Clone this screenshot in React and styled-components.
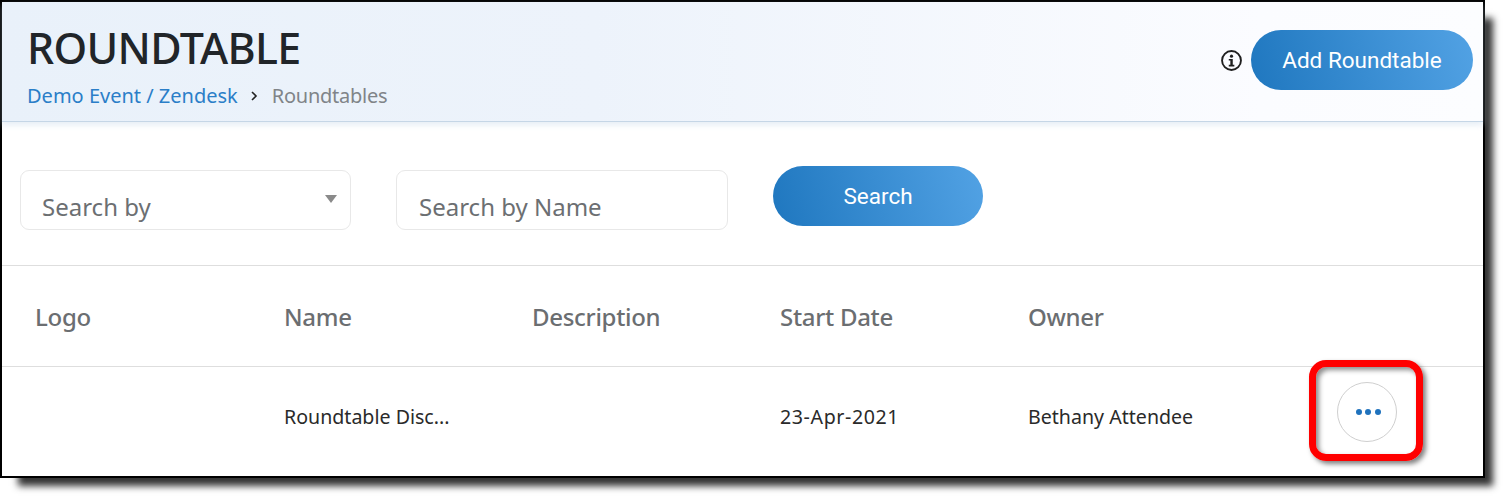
import React from "react";
import styled, { createGlobalStyle } from "styled-components";

const GlobalStyle = createGlobalStyle`
  html, body {
    margin: 0;
    padding: 0;
    background: #fff;
    font-family: "Noto Sans", "Open Sans", sans-serif;
  }
  body, #root { min-height: 503px; }
  * { box-sizing: border-box; }
`;

const columns = ["Logo", "Name", "Description", "Start Date", "Owner"];

export default function App() {
  return (
    <>
      <GlobalStyle />
      <Frame>
        <PageHeader>
          <div>
            <Title>ROUNDTABLE</Title>
            <Breadcrumb>
              <Crumb href="#">Demo Event / Zendesk</Crumb>
              <Chevron viewBox="0 0 8 10">
                <path d="M2 1l4 4-4 4" fill="none" stroke="#222" strokeWidth="1.6" />
              </Chevron>
              <CurrentCrumb>Roundtables</CurrentCrumb>
            </Breadcrumb>
          </div>
          <HeaderActions>
            <InfoIcon viewBox="0 0 20 20">
              <circle cx="10" cy="10" r="9" fill="none" stroke="#1f1f1f" strokeWidth="1.8" />
              <circle cx="10" cy="5.9" r="1.5" fill="#1f1f1f" />
              <path d="M7.4 8.5h3.8v5.6h1.5v1.5H7.4v-1.5h1.5v-4.1H7.4z" fill="#1f1f1f" />
            </InfoIcon>
            <PillButton $width={222}>Add Roundtable</PillButton>
          </HeaderActions>
        </PageHeader>

        <Filters>
          <SelectBox>
            <FieldText>Search by</FieldText>
            <Caret />
          </SelectBox>
          <InputBox>
            <FieldText>Search by Name</FieldText>
          </InputBox>
          <PillButton $width={210}>Search</PillButton>
        </Filters>

        <HeadRow>
          {columns.map((c) => (
            <HeadCell key={c}>{c}</HeadCell>
          ))}
        </HeadRow>

        <BodyRow>
          <Cell />
          <Cell>Roundtable Disc...</Cell>
          <Cell />
          <Cell $spacing={0.6}>23-Apr-2021</Cell>
          <Cell>Bethany Attendee</Cell>
          <ActionCell>
            <MoreButton>
              <Dot />
              <Dot />
              <Dot />
            </MoreButton>
            <Highlight />
          </ActionCell>
        </BodyRow>
      </Frame>
    </>
  );
}

const Frame = styled.div`
  width: 1485px;
  height: 478px;
  border: 2px solid #000;
  background: #fff;
  box-shadow: 13px 13px 7px -5px rgba(0, 0, 0, 0.8);
`;

const PageHeader = styled.header`
  display: flex;
  align-items: flex-start;
  justify-content: space-between;
  height: 120px;
  padding: 17px 10px 0 25px;
  background: linear-gradient(90deg, #e9f1fa 0%, #edf3fb 40%, #fbfcff 85%, #fcfdff 100%);
  border-bottom: 1px solid #c5d6e6;
  box-shadow: 0 3px 6px rgba(190, 210, 230, 0.4);
`;

const Title = styled.h1`
  margin: 0;
  font-size: 43px;
  line-height: 58px;
  font-weight: 500;
  color: #212529;
  letter-spacing: -0.7px;
`;

const Breadcrumb = styled.nav`
  display: flex;
  align-items: center;
  margin-top: 4px;
  font-size: 20px;
  line-height: 30px;
`;

const Crumb = styled.a`
  color: #2a7ec8;
  text-decoration: none;
`;

const Chevron = styled.svg`
  width: 8px;
  height: 10px;
  margin: 0 14px 0 12px;
`;

const CurrentCrumb = styled.span`
  color: #808488;
  letter-spacing: -0.25px;
`;

const HeaderActions = styled.div`
  display: flex;
  align-items: center;
  gap: 9px;
  margin-top: 11px;
`;

const InfoIcon = styled.svg`
  width: 21px;
  height: 21px;
`;

const PillButton = styled.button`
  width: ${(p) => p.$width}px;
  height: 60px;
  padding: 0;
  border: none;
  border-radius: 30px;
  background: linear-gradient(75deg, #1f77bf 0%, #52a2e4 100%);
  color: #fff;
  font-family: Roboto, sans-serif;
  font-size: 22.5px;
  font-weight: 400;
`;

const Filters = styled.section`
  display: flex;
  align-items: flex-start;
  height: 144px;
  padding: 44px 0 0 18px;
  border-bottom: 1px solid #dedede;
`;

const FieldBox = styled.div`
  position: relative;
  height: 60px;
  margin-top: 4px;
  padding: 19px 0 0 22px;
  border: 1px solid #e8e8e8;
  border-radius: 9px;
  background: #fff;
`;

const SelectBox = styled(FieldBox)`
  width: 331px;
  margin-right: 45px;
  padding-left: 21px;
`;

const InputBox = styled(FieldBox)`
  width: 332px;
  margin-right: 45px;
`;

const FieldText = styled.span`
  font-size: 24px;
  line-height: 33px;
  color: #6c6f72;
`;

const Caret = styled.span`
  position: absolute;
  top: 24px;
  right: 13px;
  width: 0;
  height: 0;
  border-left: 6px solid transparent;
  border-right: 6px solid transparent;
  border-top: 8px solid #8a8a8a;
`;

const tableGrid = `
  display: grid;
  grid-template-columns: 249px 248px 248px 248px 248px 1fr;
  align-items: center;
  padding-left: 33px;
`;

const HeadRow = styled.div`
  ${tableGrid}
  height: 101px;
  border-bottom: 1px solid #dedede;
`;

const HeadCell = styled.div`
  font-size: 24px;
  font-weight: 500;
  color: #6b6e71;
  letter-spacing: -0.3px;
`;

const BodyRow = styled.div`
  ${tableGrid}
  height: 100px;
`;

const Cell = styled.div`
  margin-bottom: 2px;
  font-size: 19.6px;
  color: #2a2a2a;
  letter-spacing: ${(p) => p.$spacing || 0}px;
`;

const ActionCell = styled.div`
  position: relative;
  height: 60px;
  margin-bottom: 10px;
  padding-left: 61px;
`;

const MoreButton = styled.button`
  display: flex;
  align-items: center;
  justify-content: center;
  gap: 3.5px;
  width: 60px;
  height: 60px;
  padding: 0 0 0 2px;
  border: 1px solid #cfcfcf;
  border-radius: 50%;
  background: #fff;
`;

const Dot = styled.span`
  width: 6px;
  height: 6px;
  border-radius: 50%;
  background: #1f72bd;
`;

const Highlight = styled.div`
  position: absolute;
  top: -22px;
  left: 33px;
  width: 114px;
  height: 101px;
  border: 7px solid #ff0000;
  border-radius: 17px;
  box-shadow: 3px 3px 5px rgba(0, 0, 0, 0.5), inset 3px 3px 5px rgba(0, 0, 0, 0.45);
  pointer-events: none;
`;
